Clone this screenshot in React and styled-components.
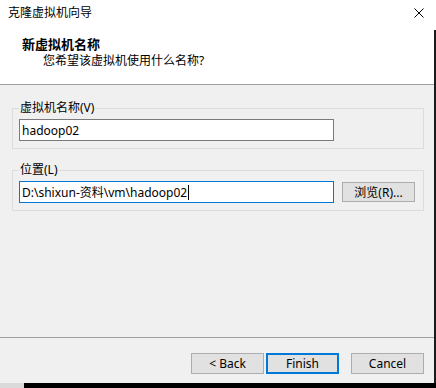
import React from "react";
import styled, { createGlobalStyle } from "styled-components";

const GlobalStyle = createGlobalStyle`
    html, body {
        margin: 0;
        padding: 0;
        background: #ffffff;
    }
    body {
        font-family: "Noto Sans", "Noto Sans CJK SC", sans-serif;
        font-size: 12px;
        color: #000000;
    }
`;

const Screen = styled.div`
    width: 436px;
    height: 388px;
    display: flex;
    flex-direction: column;
    overflow: hidden;
`;

const TitleBar = styled.div`
    height: 30px;
    flex: 0 0 30px;
    background: #ffffff;
    display: flex;
    align-items: center;
    justify-content: space-between;
    padding: 0 12px 0 8px;
    box-sizing: border-box;
`;

const TitleText = styled.span`
    font-size: 12px;
    line-height: 16px;
    margin-top: -4px;
`;

const CloseButton = styled.div`
    width: 10px;
    height: 10px;
    margin-top: -5px;
    display: flex;
`;

const Middle = styled.div`
    flex: 1;
    display: flex;
    min-height: 0;
`;

const Dialog = styled.div`
    flex: 1;
    display: flex;
    flex-direction: column;
    background: #f0f0f0;
`;

const RightEdge = styled.div`
    width: 2px;
    background: #1b1b1b;
`;

const Header = styled.div`
    height: 55px;
    flex: 0 0 55px;
    background: #ffffff;
    border-bottom: 1px solid #a0a0a0;
    padding: 5px 0 0 22px;
    box-sizing: border-box;
`;

const HeaderTitle = styled.div`
    font-size: 13px;
    font-weight: bold;
    line-height: 18px;
`;

const HeaderSub = styled.div`
    font-size: 12px;
    line-height: 16px;
    padding-left: 21px;
`;

const Content = styled.div`
    flex: 1;
    padding: 15px 10px 0 12px;
    display: flex;
    flex-direction: column;
    gap: 13px;
`;

const Group = styled.fieldset`
    margin: 0;
    padding: 3px 6px 7px 6px;
    border: 1px solid #dcdcdc;
    min-width: 0;
`;

const Legend = styled.legend`
    padding: 0 1px;
    margin: 0;
    font-size: 12px;
    line-height: 16px;
`;

const Row = styled.div`
    display: flex;
    align-items: center;
    gap: 8px;
`;

const TextBox = styled.div`
    width: 315px;
    height: 22px;
    box-sizing: border-box;
    background: #ffffff;
    border: 1px solid ${(p) => (p.$focused ? "#0078d7" : "#7a7a7a")};
    padding: 0 2px;
    display: flex;
    align-items: center;
    font-size: 12px;
    white-space: nowrap;
`;

const Caret = styled.span`
    display: inline-block;
    width: 1px;
    height: 15px;
    background: #000000;
    margin-left: 1px;
`;

const Button = styled.button`
    width: 73px;
    height: ${(p) => (p.$small ? "20px" : "21px")};
    box-sizing: border-box;
    background: #e1e1e1;
    border: ${(p) => (p.$primary ? "2px solid #0078d7" : "1px solid #adadad")};
    font-family: "Noto Sans", "Noto Sans CJK SC", sans-serif;
    font-size: 12px;
    color: #000000;
    padding: 0;
    margin-left: ${(p) => p.$gap || 0}px;
`;

const Footer = styled.div`
    border-top: 1px solid #a0a0a0;
    height: 46px;
    flex: 0 0 46px;
    display: flex;
    justify-content: flex-end;
    align-items: flex-start;
    padding: 15px 10px 0 0;
    box-sizing: border-box;
`;

const BottomStrip = styled.div`
    height: 5px;
    flex: 0 0 5px;
    display: flex;
    background: #000000;
`;

const StripLight = styled.div`
    width: 24px;
    background: #dadada;
`;

export default function App() {
    return (
        <Screen>
            <GlobalStyle />
            <TitleBar>
                <TitleText>克隆虚拟机向导</TitleText>
                <CloseButton>
                    <svg width="10" height="10" viewBox="0 0 10 10">
                        <path d="M0.5 0.5 L9.5 9.5 M9.5 0.5 L0.5 9.5" stroke="#000" strokeWidth="1" />
                    </svg>
                </CloseButton>
            </TitleBar>
            <Middle>
                <Dialog>
                    <Header>
                        <HeaderTitle>新虚拟机名称</HeaderTitle>
                        <HeaderSub>您希望该虚拟机使用什么名称?</HeaderSub>
                    </Header>
                    <Content>
                        <Group>
                            <Legend>虚拟机名称(V)</Legend>
                            <Row>
                                <TextBox>hadoop02</TextBox>
                            </Row>
                        </Group>
                        <Group>
                            <Legend>位置(L)</Legend>
                            <Row>
                                <TextBox $focused>
                                    D:\shixun-资料\vm\hadoop02
                                    <Caret />
                                </TextBox>
                                <Button $small>浏览(R)...</Button>
                            </Row>
                        </Group>
                    </Content>
                    <Footer>
                        <Button>&lt; Back</Button>
                        <Button $primary $gap={2}>Finish</Button>
                        <Button $gap={12}>Cancel</Button>
                    </Footer>
                </Dialog>
                <RightEdge />
            </Middle>
            <BottomStrip>
                <StripLight />
            </BottomStrip>
        </Screen>
    );
}
